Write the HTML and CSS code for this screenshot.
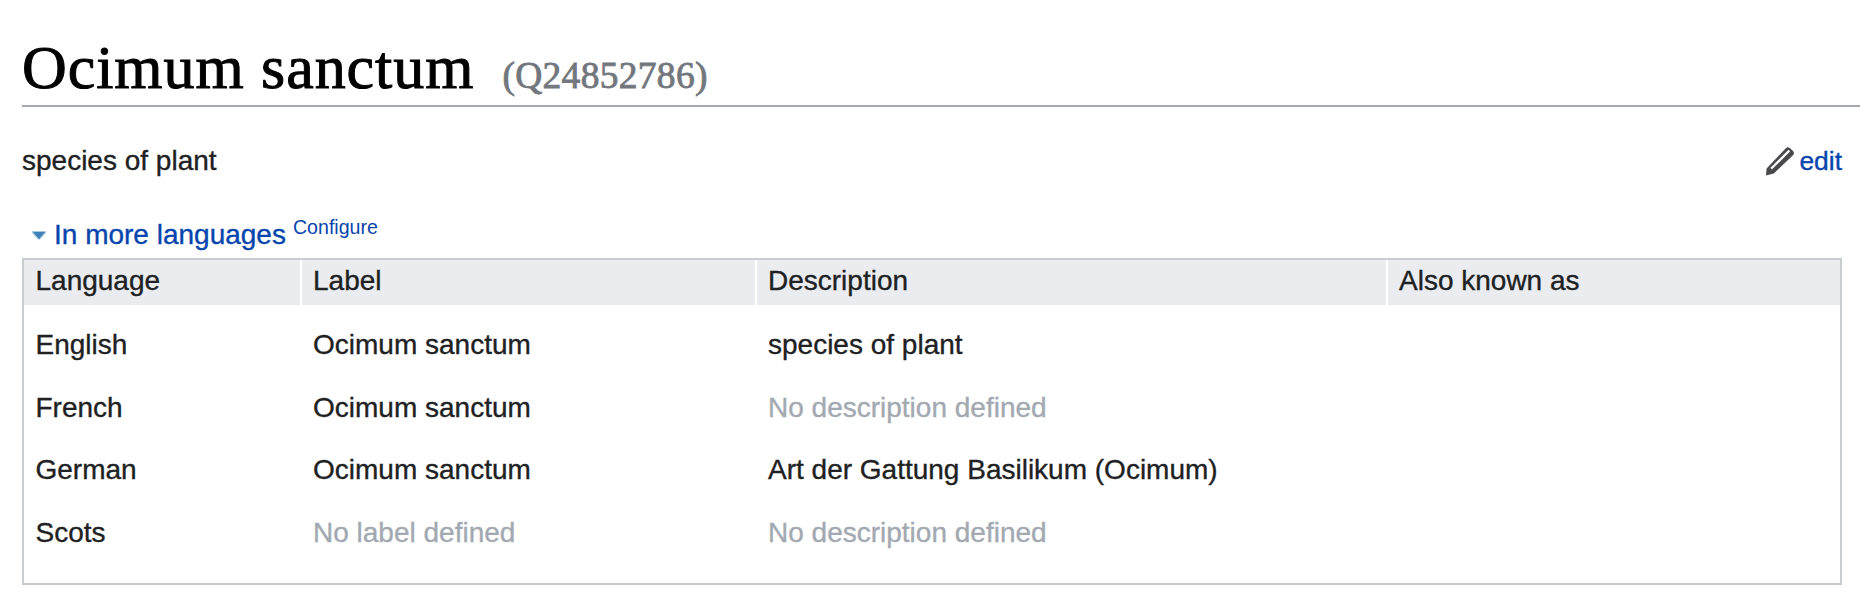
FILE: index.html
```
<!DOCTYPE html>
<html lang="en">
<head>
<meta charset="utf-8">
<title>Ocimum sanctum</title>
<link rel="stylesheet" href="styles.css">
</head>
<body>
<main class="entity">
  <h1 class="heading"><span class="heading-label">Ocimum sanctum</span><span class="heading-id">(Q24852786)</span></h1>
  <div class="summary">
    <span>species of plant</span>
    <a class="edit" href="#">
      <svg class="pencil" width="28" height="29" viewBox="0 0 28 29"><path fill="#4a4a4d" fill-rule="evenodd" d="M0 28.5.6 21.4 19.8 1.2Q21.6-.5 23.8 1.1L27 4Q28.8 6 27.2 8L7.8 26.4ZM4.2 20.9 6 22.3 23.8 4.8Q24.2 3.2 22.3 3Z"/></svg>
      <span>edit</span>
    </a>
  </div>
  <div class="toggler">
    <svg class="arrow" width="14" height="9" viewBox="0 0 14 9"><path fill="#a9c9e2" d="M0 0h14v2L8 8.5H6L0 2Z"/><path fill="#3d80b8" d="M1 1h12L7 8Z"/></svg>
    <a class="more" href="#">In more languages</a>
    <a class="configure" href="#">Configure</a>
  </div>
  <table class="terms">
    <thead>
      <tr><th class="col-language">Language</th><th class="col-label">Label</th><th class="col-description">Description</th><th>Also known as</th></tr>
    </thead>
    <tbody>
      <tr><td>English</td><td>Ocimum sanctum</td><td>species of plant</td><td></td></tr>
      <tr><td>French</td><td>Ocimum sanctum</td><td class="empty">No description defined</td><td></td></tr>
      <tr><td>German</td><td>Ocimum sanctum</td><td>Art der Gattung Basilikum (Ocimum)</td><td></td></tr>
      <tr><td>Scots</td><td class="empty">No label defined</td><td class="empty">No description defined</td><td></td></tr>
    </tbody>
  </table>
</main>
</body>
</html>
```
FILE: styles.css
```
* { box-sizing: border-box; }
body {
  margin: 0;
  background: #fff;
  color: #202122;
  font: 28px/40px "Liberation Sans", Arial, sans-serif;
  -webkit-text-stroke: 0.35px;
}
a { color: #0645ad; text-decoration: none; }
.entity { padding: 34px 0 0 22px; }
.heading {
  display: flex;
  align-items: baseline;
  gap: 28px;
  height: 73px;
  margin: 0;
  border-bottom: 2px solid #a2a9b1;
  color: #000;
  font: 400 62px/66px "Liberation Serif", serif;
}
.heading-label { letter-spacing: 0.95px; -webkit-text-stroke: 1px; }
.heading-id { color: #72777d; font-size: 37.5px; letter-spacing: 0.3px; -webkit-text-stroke: 0.8px; }
.summary {
  display: flex;
  justify-content: space-between;
  margin: 34px 18px 0 0;
}
.edit { display: flex; align-items: center; gap: 5px; font-size: 26.4px; }
.pencil { margin-right: 0.5px; }
.toggler {
  display: flex;
  align-items: center;
  height: 40px;
  margin-top: 34px;
  padding-left: 10px;
}
.arrow { margin: 1px 8px 0 0; }
.more { margin-right: 7px; }
.configure { font-size: 19.6px; line-height: 24px; margin-bottom: 16px; -webkit-text-stroke: 0; }
.terms {
  width: 1820px;
  height: 327px;
  margin-top: 3px;
  border: 2px solid #c8ccd1;
  border-spacing: 0;
  table-layout: fixed;
}
th {
  height: 45px;
  padding: 0 0 3px 11px;
  border-left: 2px solid #fff;
  background: #eaecf0;
  font-weight: 400;
  text-align: left;
}
th:first-child { border-left: 0; }
td { height: 62.6px; padding: 0 0 0 13px; vertical-align: top; }
tbody::before { content: ""; display: block; height: 20px; }
tbody::after { content: ""; display: block; height: 8px; }
th:first-child, td:first-child { padding-left: 11.5px; }
.col-language { width: 276px; }
.col-label { width: 455px; }
.col-description { width: 631px; }
.empty { color: #a2a9b1; }
```
